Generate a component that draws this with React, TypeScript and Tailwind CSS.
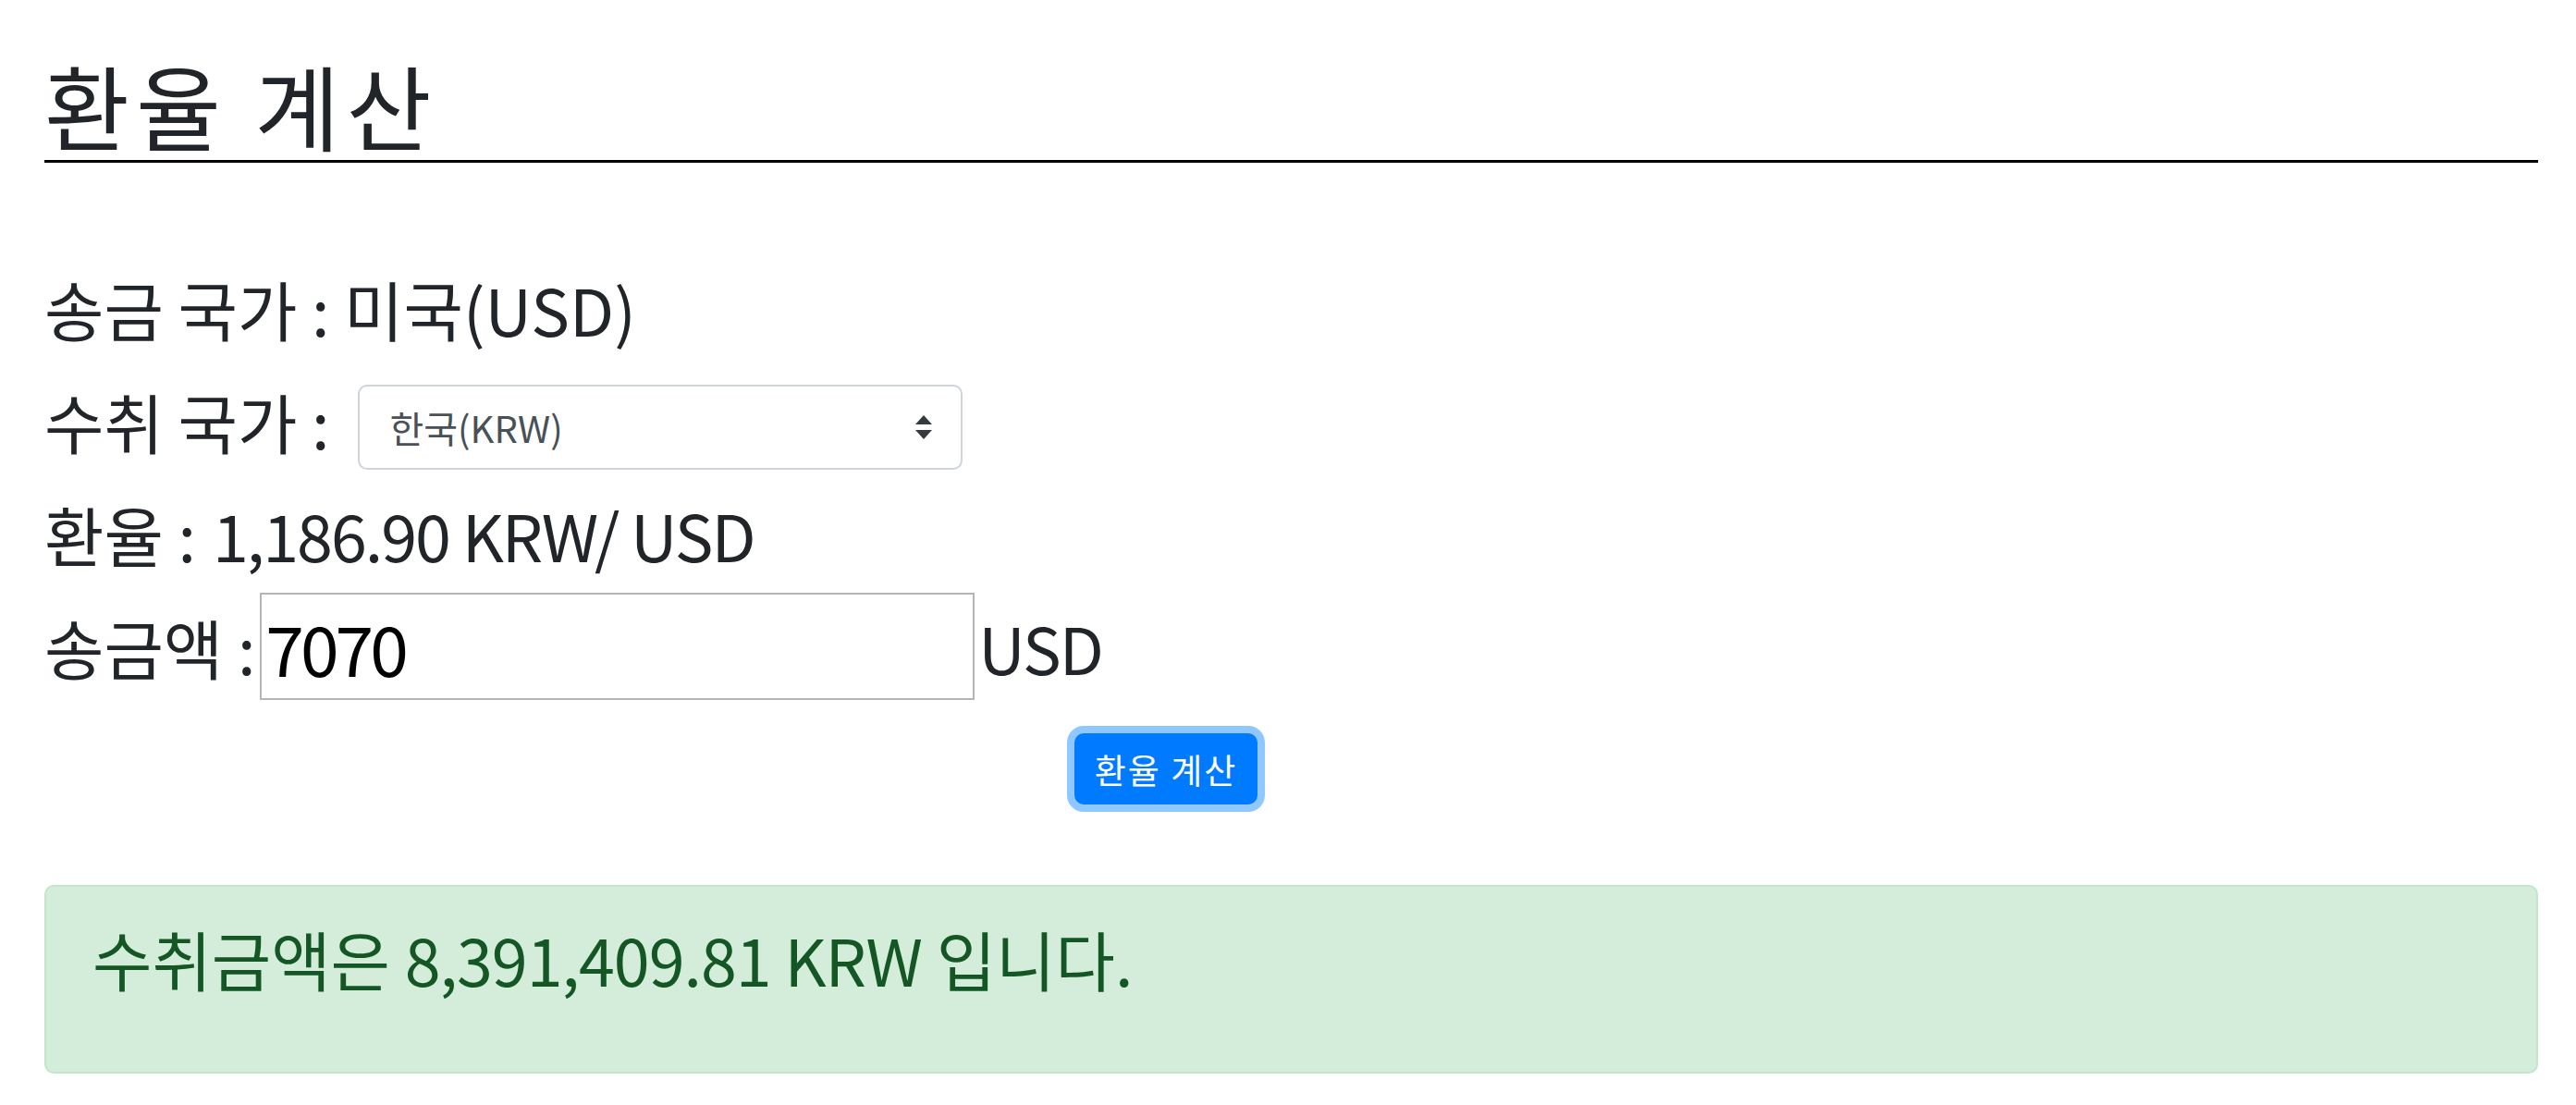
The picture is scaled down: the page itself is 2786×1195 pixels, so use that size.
export default function App() {
  return (
    <div
      className="min-h-screen bg-white pl-[48px] pr-[41px] text-[#212529]"
      style={{ fontFamily: '"Noto Sans CJK KR", "Noto Sans", sans-serif' }}
    >
      <h1 className="pt-[53px] border-b-[3px] border-black text-[100px] font-normal leading-[120px] tracking-[7px]">
        환율 계산
      </h1>

      <div className="mt-[96px] flex flex-col">
        <div className="flex h-[122px] items-center text-[70px] leading-[105px]">
          송금 국가 : 미국(USD)
        </div>

        <div className="flex h-[122px] items-center text-[70px] leading-[105px]">
          <span>수취 국가 :</span>
          <div className="relative ml-[31px] mt-[14px] flex h-[92px] w-[654px] items-center rounded-[10px] border-[2.5px] border-[#ced4da] pl-[32px] text-[40px] leading-[60px] text-[#495057]">
            한국(KRW)
            <svg
              className="absolute right-[30px] top-1/2 -translate-y-1/2"
              width="20"
              height="30"
              viewBox="0 0 20 30"
            >
              <path d="M10 2 L19 12 L1 12 Z" fill="#343a40" />
              <path d="M10 28 L19 18 L1 18 Z" fill="#343a40" />
            </svg>
          </div>
        </div>

        <div className="flex h-[122px] items-center text-[70px] leading-[105px]">
          <span>환율 :</span>
          <span className="ml-[18px] tracking-[-2px]">1,186.90 KRW/ USD</span>
        </div>

        <div className="flex h-[122px] items-center text-[70px] leading-[105px]">
          <span>송금액 :</span>
          <div className="ml-[5px] flex h-[116px] w-[773px] items-center border-2 border-[#b5b5b5] pl-[4px] text-[75px] leading-[105px] tracking-[-4px] text-black">
            7070
          </div>
          <span className="ml-[4px] tracking-[-2px]">USD</span>
        </div>
      </div>

      <div className="mt-[33px] flex w-[2426px] justify-center">
        <button className="h-[77px] rounded-[10px] border-[2.5px] border-[#007bff] bg-[#007bff] px-[20px] text-[37px] leading-[52px] tracking-[2px] text-white ring-[8px] ring-[#91c7ff]">
          환율 계산
        </button>
      </div>

      <div className="mt-[87px] rounded-[10px] border-[2.5px] border-[#c3e6cb] bg-[#d4edda] px-[50px] pt-[25px] pb-[70px] text-[70px] leading-[105px] text-[#155724]">
        수취금액은 <span className="tracking-[-1px]">8,391,409.81 KRW</span> 입니다.
      </div>
    </div>
  );
}
